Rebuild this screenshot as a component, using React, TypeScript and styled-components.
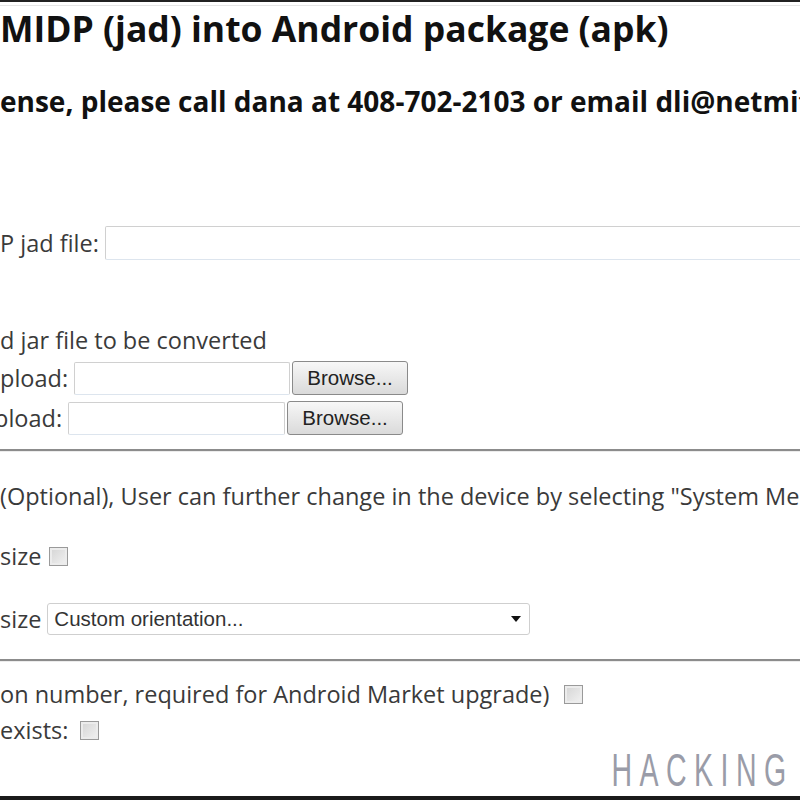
import React from "react";
import styled, { createGlobalStyle } from "styled-components";

const Global = createGlobalStyle`
  html, body { margin: 0; padding: 0; background: #fff; }
  body { font-family: "Open Sans", "DejaVu Sans", sans-serif; }
`;

const Frame = styled.div`
  position: relative;
  width: 800px;
  height: 800px;
  box-sizing: border-box;
  overflow: hidden;
  background: #fff;
  border-top: 2px solid #222;
  border-bottom: 4px solid #1a1a1a;
  white-space: nowrap;
  &::before {
    content: "";
    display: block;
    height: 1px;
    margin-top: 3px;
    background: #e6e6e6;
  }
`;

const Title = styled.h1`
  margin: 0;
  font-size: 35.5px;
  line-height: 44px;
  font-weight: 700;
  color: #111;
`;

const Contact = styled.h2`
  margin: 33px 0 0 0;
  font-size: 28px;
  line-height: 36px;
  font-weight: 700;
  color: #111;
`;

const Section = styled.div<{ $top: number }>`
  margin-top: ${(p) => p.$top}px;
  display: flex;
  flex-direction: column;
`;

const Row = styled.div<{ $mt?: number; $h?: number; $shift?: number }>`
  display: flex;
  align-items: center;
  gap: 6px;
  height: ${(p) => p.$h ?? 30}px;
  margin-top: ${(p) => p.$mt ?? 0}px;
  margin-left: ${(p) => p.$shift ?? 0}px;
  font-size: 23.5px;
  color: #3a3a3a;
`;

const Text = styled.div<{ $mt?: number }>`
  display: flex;
  align-items: center;
  margin-top: ${(p) => p.$mt ?? 0}px;
  font-size: 23.5px;
  line-height: 30px;
  height: 30px;
  color: #3a3a3a;
`;

const TextInput = styled.div<{ $w: number; $h: number }>`
  width: ${(p) => p.$w}px;
  height: ${(p) => p.$h}px;
  box-sizing: border-box;
  border: 1px solid #d0d0d0;
  border-bottom-color: #dde5ee;
  border-radius: 2px;
  background: #fff;
  flex-shrink: 0;
`;

const BrowseButton = styled.div`
  width: 116px;
  height: 34px;
  box-sizing: border-box;
  border: 1px solid #8a8a8a;
  border-radius: 3px;
  background: linear-gradient(#f7f7f7, #dadada);
  display: flex;
  align-items: center;
  justify-content: center;
  font-family: "Liberation Sans", Arial, sans-serif;
  font-size: 20.5px;
  color: #222;
  margin-left: -4px;
  flex-shrink: 0;
`;

const Divider = styled.div<{ $mt: number }>`
  margin-top: ${(p) => p.$mt}px;
  height: 2px;
  background: #8c8c8c;
  border-bottom: 1px solid #ececec;
`;

const Check = styled.span<{ $ml?: number }>`
  display: inline-block;
  width: 19px;
  height: 19px;
  box-sizing: border-box;
  border: 1px solid #9a9a9a;
  background: linear-gradient(135deg, #d4d4d4, #f2f2f2);
  box-shadow: inset 0 0 0 2px #ececec;
  margin-left: ${(p) => p.$ml ?? 0}px;
  flex-shrink: 0;
`;

const Select = styled.div`
  width: 483px;
  height: 32px;
  box-sizing: border-box;
  border: 1px solid #cfcfcf;
  border-radius: 3px;
  display: flex;
  align-items: center;
  justify-content: space-between;
  padding: 0 8px 0 6px;
  font-family: "Liberation Sans", Arial, sans-serif;
  font-size: 20.5px;
  color: #333;
  flex-shrink: 0;
`;

const Arrow = styled.span`
  width: 0;
  height: 0;
  border-left: 5px solid transparent;
  border-right: 5px solid transparent;
  border-top: 6px solid #111;
`;

const Watermark = styled.div`
  position: absolute;
  right: 6px;
  bottom: 1px;
  font-family: "Liberation Sans", Arial, sans-serif;
  font-size: 46px;
  line-height: 50px;
  letter-spacing: 12px;
  color: #9a9ca8;
  transform: scaleX(0.62);
  transform-origin: right center;
`;

export default function App() {
  return (
    <>
      <Global />
      <Frame>
        <Title>MIDP (jad) into Android package (apk)</Title>
        <Contact>ense, please call dana at 408-702-2103 or email dli@netmit</Contact>
        <Section $top={107}>
          <Row $h={34}>
            <span>P jad file:</span>
            <TextInput $w={720} $h={34} />
          </Row>
          <Text $mt={65}>d jar file to be converted</Text>
          <Row $mt={6} $h={34}>
            <span>pload:</span>
            <TextInput $w={216} $h={33} />
            <BrowseButton>Browse...</BrowseButton>
          </Row>
          <Row $mt={6} $h={34} $shift={-6}>
            <span>pload:</span>
            <TextInput $w={217} $h={33} />
            <BrowseButton>Browse...</BrowseButton>
          </Row>
        </Section>
        <Divider $mt={14} />
        <Text $mt={29}>(Optional), User can further change in the device by selecting "System Menu"</Text>
        <Row $mt={30}>
          <span>size</span>
          <Check $ml={2} />
        </Row>
        <Row $mt={32} $h={32}>
          <span>size</span>
          <Select>
            <span>Custom orientation...</span>
            <Arrow />
          </Select>
        </Row>
        <Divider $mt={24} />
        <Text $mt={17}>
          on number, required for Android Market upgrade)
          <Check $ml={14} />
        </Text>
        <Row $mt={6}>
          <span>exists:</span>
          <Check $ml={6} />
        </Row>
        <Watermark>HACKING</Watermark>
      </Frame>
    </>
  );
}
